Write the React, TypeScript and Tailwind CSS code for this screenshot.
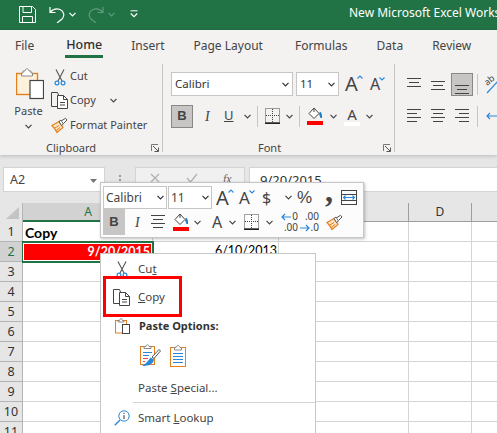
import React from "react";

const UI = { fontFamily: '"Noto Sans", "Open Sans", sans-serif' };

const Chev = ({ c = "#444", className = "" }: { c?: string; className?: string }) => (
  <svg width="7" height="5" viewBox="0 0 7 5" className={"shrink-0 " + className}>
    <polyline points="0.5,0.8 3.5,3.8 6.5,0.8" fill="none" stroke={c} strokeWidth="1.2" />
  </svg>
);

const Scissors = () => (
  <svg width="12" height="17" viewBox="0 0 12 17" className="shrink-0">
    <path d="M2 0.5 L8 12 M10 0.5 L4 12" stroke="#555" strokeWidth="1.1" fill="none" />
    <circle cx="3" cy="14" r="1.9" fill="none" stroke="#2b88d8" strokeWidth="1.2" />
    <circle cx="9" cy="14" r="1.9" fill="none" stroke="#2b88d8" strokeWidth="1.2" />
  </svg>
);

const CopyIcon = () => (
  <svg width="17" height="17" viewBox="0 0 17 17" className="shrink-0">
    <path d="M6 14.5 H0.5 V0.5 H6.5 L7.5 3" fill="none" stroke="#444" />
    <path d="M6.5 3.5 H12.5 L16.5 7.5 V16.5 H6.5 Z" fill="#fff" stroke="#444" />
    <path d="M12.5 3.5 V7.5 H16.5 M9 10.5 H14 M9 13 H14" fill="none" stroke="#444" />
  </svg>
);

const Brush = ({ s = 17 }: { s?: number }) => (
  <svg width={s} height={s} viewBox="0 0 17 16" className="shrink-0">
    <path d="M1 8 L8 4 L12 10 L6 15 C5 13 3 10 1 8 Z" fill="#fbe3c4" stroke="#e3801e" strokeWidth="1.2" />
    <path d="M3 11 L8 8 M5 13 L9 10" stroke="#e3801e" />
    <path d="M8 4 L10 2.5 L12.5 6.5 L10.5 8 Z" fill="#fff" stroke="#555" />
    <path d="M11 3 L14.5 0.8 L16 2.5 L12.5 6" fill="#fff" stroke="#555" />
  </svg>
);

const Launcher = ({ className = "" }: { className?: string }) => (
  <svg width="8" height="8" viewBox="0 0 8 8" className={"shrink-0 " + className}>
    <path d="M0.5 7 V0.5 H7" fill="none" stroke="#777" />
    <path d="M2 2 L7 7 M3.5 7.5 H7.5 V3.5" fill="none" stroke="#555" />
  </svg>
);

const Lines = ({ w = 14, ws = [14, 14, 14], ox = [0, 0, 0], gap = 5, y0 = 1 }: { w?: number; ws?: number[]; ox?: number[]; gap?: number; y0?: number }) => (
  <svg width={w} height="14" viewBox={`0 0 ${w} 14`} className="shrink-0">
    {ws.map((l, i) => (
      <line key={i} x1={ox[i]} x2={ox[i] + l} y1={y0 + i * gap + 0.5} y2={y0 + i * gap + 0.5} stroke="#444" />
    ))}
  </svg>
);

const Fill = () => (
  <svg width="17" height="18" viewBox="0 0 17 18" className="shrink-0">
    <path d="M7 1 L12 6.5 L7 11.5 L2 6.5 Z" fill="#fff" stroke="#444" />
    <path d="M7 1 V5" stroke="#444" />
    <path d="M12 7 C13 4 13.5 3.5 15 8 V11 H13.5 Z" fill="#1f7fc8" />
    <rect x="0" y="14" width="16" height="4" fill="#f00" />
  </svg>
);

const Borders = () => (
  <svg width="15" height="16" viewBox="0 0 15 16" className="shrink-0">
    <rect x="0.5" y="0.5" width="14" height="14" fill="none" stroke="#444" strokeDasharray="1 1" />
    <path d="M7.5 1 V14 M1 7.5 H14" stroke="#444" strokeDasharray="1 1" />
    <rect x="0" y="14.5" width="15" height="1.5" fill="#222" />
  </svg>
);

const DecIcon = ({ left }: { left: boolean }) => (
  <div className="flex flex-col items-end w-[17px] text-[10px] leading-[11px] text-[#444] relative shrink-0">
    {left ? (
      <>
        <span className="flex items-center">
          <svg width="11" height="8" viewBox="0 0 11 8"><path d="M10 4 H1 M4 1 L1 4 L4 7" fill="none" stroke="#2b88d8" strokeWidth="1.2" /></svg>
          <span>0</span>
        </span>
        <span>.00</span>
      </>
    ) : (
      <>
        <span>.00</span>
        <span className="flex items-center">
          <svg width="11" height="8" viewBox="0 0 11 8"><path d="M0 4 H9 M6 1 L9 4 L6 7" fill="none" stroke="#2b88d8" strokeWidth="1.2" /></svg>
          <span>.0</span>
        </span>
      </>
    )}
  </div>
);

const GrowA = ({ up, size = 20 }: { up: boolean; size?: number }) => (
  <span className="flex items-start text-[#444] w-[16px] shrink-0 leading-none" style={{ fontSize: size }}>
    A
    <svg width="6" height="4" viewBox="0 0 6 4" className="mt-[1px] -ml-[1px] shrink-0">
      <polyline points={up ? "0.5,3.5 3,1 5.5,3.5" : "0.5,0.5 3,3 5.5,0.5"} fill="none" stroke="#2b88d8" strokeWidth="1.1" />
    </svg>
  </span>
);

const PasteLarge = () => (
  <svg width="28" height="32" viewBox="0 0 28 32" className="shrink-0">
    <rect x="0.5" y="5.5" width="21" height="21" fill="#fdf1dc" stroke="#e3801e" strokeWidth="1.4" />
    <path d="M7 5 V3 H9 C9.5 0 12.5 0 13 3 H15 V5 L16.5 5 V8 H5.5 V5 Z" fill="#fff" stroke="#888" />
    <rect x="14" y="12.5" width="13.5" height="18" fill="#fff" stroke="#444" strokeWidth="1.2" />
  </svg>
);

const PasteSmall = () => (
  <svg width="15" height="16" viewBox="0 0 15 16" className="shrink-0">
    <rect x="0.5" y="2.5" width="11" height="12.5" fill="#fff" stroke="#e3801e" />
    <path d="M3 2.5 H4.5 C5 0 7 0 7.5 2.5 H9 V4 H3 Z" fill="#fff" stroke="#888" />
    <rect x="7.5" y="6.5" width="7" height="9" fill="#fff" stroke="#444" />
  </svg>
);

const PasteFormat = () => (
  <svg width="21" height="23" viewBox="0 0 21 23" className="shrink-0">
    <rect x="0.5" y="2.5" width="14" height="18" fill="#fff" stroke="#e3801e" />
    <path d="M4 2.5 H6 C6.5 0 8.5 0 9 2.5 H11 V4.5 H4 Z" fill="#fff" stroke="#888" />
    <path d="M3 8.5 H12 M3 11.5 H9" stroke="#2b88d8" />
    <path d="M3 14.5 H8 M3 17.5 H5" stroke="#e84b3c" />
    <path d="M12 13 L19 5.5 L20.5 7 L14 14.5 Z" fill="#fff" stroke="#555" />
    <path d="M10.5 13.5 L14 15.5 C13.5 20 9 22 2 22 C6 20 8 17 10.5 13.5 Z" fill="#2b88d8" />
  </svg>
);

const PasteValues = () => (
  <svg width="16" height="22" viewBox="0 0 16 22" className="shrink-0">
    <rect x="0.5" y="2.5" width="15" height="19" fill="#fff" stroke="#e3801e" />
    <path d="M4.5 2.5 H6 C6.5 0 9.5 0 10 2.5 H11.5 V5 H4.5 Z" fill="#fff" stroke="#888" />
    <path d="M3 8.5 H13 M3 11.5 H13 M3 14.5 H13 M3 17.5 H13" stroke="#2b88d8" />
  </svg>
);

const Lookup = () => (
  <svg width="16" height="16" viewBox="0 0 16 16" className="shrink-0">
    <circle cx="10" cy="6" r="5.2" fill="#fff" stroke="#2b88d8" />
    <path d="M6 10 L0.8 15.2" stroke="#2b88d8" strokeWidth="1.4" />
    <path d="M10 5.2 V9 M10 2.8 V4" stroke="#333" />
  </svg>
);

const Wrap = () => (
  <svg width="16" height="15" viewBox="0 0 16 15" className="shrink-0">
    <rect x="0.5" y="0.5" width="15" height="14" fill="none" stroke="#444" />
    <path d="M0 4.5 H16 M0 10.5 H16" stroke="#444" />
    <path d="M2 7.5 H14 M4.5 5.5 L2.5 7.5 L4.5 9.5 M11.5 5.5 L13.5 7.5 L11.5 9.5" fill="none" stroke="#2b88d8" strokeWidth="1.1" />
  </svg>
);

const Orient = () => (
  <svg width="14" height="20" viewBox="0 0 14 20" className="shrink-0">
    <text x="0" y="10" fontSize="9" fill="#444" transform="rotate(-40 4 8)" style={{ fontFamily: '"Noto Sans", sans-serif' }}>ab</text>
    <path d="M2 19 L13 7" stroke="#2b88d8" strokeWidth="1.2" />
  </svg>
);

const Tab = ({ t, x, on }: { t: string; x: string; on?: boolean }) => (
  <div className={"relative h-full flex items-center pt-[3px] " + x + (on ? " text-[#2f2f2f] font-medium text-[12.5px]" : " text-[#444]")}>
    {t}
    {on && <div className="absolute left-0 right-0 bottom-0 h-[3px] bg-[#217346]" />}
  </div>
);

const Section = ({ w, children }: { w: string; children: React.ReactNode }) => (
  <section className={"h-[88px] mt-[6px] border-r border-[#c8c6c4] shrink-0 flex flex-col " + w}>{children}</section>
);

const rows = [1, 2, 3, 4, 5, 6, 7, 8, 9, 10, 11];

const Sep = ({ className = "" }: { className?: string }) => <div className={"w-px h-[21px] bg-[#c8c6c4] shrink-0 " + className} />;

const calibriish = { fontFamily: '"Lato", sans-serif' };

export default function App() {
  return (
    <div className="relative w-[497px] h-[433px] overflow-hidden bg-[#e6e6e6] text-[12px]" style={UI}>
      {/* Title bar */}
      <header className="h-[30px] bg-[#217346] flex items-center text-white">
        <svg width="17" height="17" viewBox="0 0 17 17" className="ml-[19px] mb-[2px] shrink-0">
          <path d="M0.5 0.5 H13.5 L16.5 3.5 V16.5 H0.5 Z M4 0.5 V6.5 H12.5 V0.5 M3.5 16.5 V10.5 H13.5 V16.5" fill="none" stroke="#fff" />
        </svg>
        <svg width="16" height="17" viewBox="0 0 16 17" className="ml-[13px] mb-[2px] shrink-0">
          <path d="M1 1 V6.5 H6.5 M1 6.5 C4 3 8 2.5 11 3.5 C15 5 16 10 13 13 L8 17" fill="none" stroke="#fff" strokeWidth="1.2" />
        </svg>
        <Chev c="#fff" className="ml-[4px] mb-[2px]" />
        <svg width="16" height="17" viewBox="0 0 16 17" className="ml-[12px] mb-[2px] shrink-0">
          <path d="M15 1 V6.5 H9.5 M15 6.5 C12 3 8 2.5 5 3.5 C1 5 0 10 3 13 L8 17" fill="none" stroke="#5f9a7d" strokeWidth="1.2" />
        </svg>
        <Chev c="#5f9a7d" className="ml-[4px] mb-[2px]" />
        <svg width="8" height="8" viewBox="0 0 8 8" className="ml-[15px] mb-[2px] shrink-0">
          <path d="M0.5 0.8 H7.5" stroke="#fff" />
          <polyline points="0.8,3.5 4,6.7 7.2,3.5" fill="none" stroke="#fff" strokeWidth="1.2" />
        </svg>
        <span className="ml-[211px] mb-[5px] whitespace-nowrap text-[12px]">New Microsoft Excel Worksheet</span>
      </header>

      {/* Ribbon */}
      <div className="h-[125px] bg-[#f3f2f1] shadow-[0_1px_4px_rgba(0,0,0,0.2)] relative">
        <nav className="h-[28px] flex text-[12px] whitespace-nowrap">
          <Tab t="File" x="ml-[15px]" />
          <Tab t="Home" x="ml-[31px] w-[38px] justify-center" on />
          <Tab t="Insert" x="ml-[28px]" />
          <Tab t="Page Layout" x="ml-[29px]" />
          <Tab t="Formulas" x="ml-[32px]" />
          <Tab t="Data" x="ml-[29px]" />
          <Tab t="Review" x="ml-[29px]" />
        </nav>
        <div className="flex h-[97px] overflow-hidden text-[#444]">
          <Section w="w-[163px]">
            <div className="h-[76px] shrink-0 flex text-[11px]">
              <div className="ml-[15px] w-[30px] flex flex-col items-center">
                <div className="mt-[4px]"><PasteLarge /></div>
                <span className="mt-[3px] leading-[16px] -ml-[3px]">Paste</span>
                <Chev className="mt-[5px] -ml-[3px]" />
              </div>
              <div className="ml-[6px] flex flex-col whitespace-nowrap">
                <div className="h-[24px] flex items-center">
                  <div className="w-[19px] pl-[3px] pt-[2px] flex"><Scissors /></div>
                  <span>Cut</span>
                </div>
                <div className="h-[25px] flex items-center">
                  <div className="w-[19px] flex"><CopyIcon /></div>
                  <span>Copy</span>
                  <Chev className="ml-[14px]" />
                </div>
                <div className="h-[24px] flex items-center">
                  <div className="w-[19px] flex"><Brush /></div>
                  <span>Format Painter</span>
                </div>
              </div>
            </div>
            <div className="h-[16px] shrink-0 flex items-center leading-[16px] text-[11px]">
              <span className="ml-[46px]">Clipboard</span>
              <Launcher className="ml-auto mr-[3px]" />
            </div>
          </Section>

          <Section w="w-[232px]">
            <div className="h-[76px] shrink-0 pl-[8px] pt-[8px]">
              <div className="flex items-center h-[24px] text-[11.5px]">
                <div className="w-[122px] h-[24px] bg-white border border-[#c8c6c4] flex items-center pl-[3px] text-[#333]">
                  Calibri
                  <Chev c="#333" className="ml-auto mr-[3px]" />
                </div>
                <div className="ml-[3px] w-[43px] h-[24px] bg-white border border-[#c8c6c4] flex items-center pl-[3px] text-[#333]">
                  11
                  <Chev c="#333" className="ml-auto mr-[3px]" />
                </div>
                <div className="ml-[6px]"><GrowA up /></div>
                <div className="ml-[9px]"><GrowA up={false} size={16} /></div>
              </div>
              <div className="flex items-center h-[24px] mt-[8px]">
                <div className="w-[22px] h-[23px] bg-[#c8c6c4] border border-[#8a8886] flex items-center justify-center font-bold text-[13px]" style={{ fontFamily: '"Liberation Sans", sans-serif' }}>B</div>
                <span className="ml-[12px] w-[8px] italic text-[14px]" style={{ fontFamily: '"Liberation Serif", serif' }}>I</span>
                <span className="ml-[11px] w-[10px] underline text-[13px]">U</span>
                <Chev className="ml-[10px]" />
                <Sep className="ml-[6px]" />
                <div className="ml-[7px]"><Borders /></div>
                <Chev className="ml-[6px]" />
                <Sep className="ml-[6px]" />
                <div className="ml-[7px]"><Fill /></div>
                <Chev className="ml-[6px]" />
                <div className="ml-[7px] flex flex-col items-center w-[16px]">
                  <span className="text-[15px] leading-[14px]">A</span>
                  <div className="w-[16px] h-[4px] bg-white mt-[1px]" />
                </div>
                <Chev className="ml-[6px]" />
              </div>
            </div>
            <div className="h-[16px] shrink-0 flex items-center leading-[16px] text-[11px]">
              <span className="ml-[95px]">Font</span>
              <Launcher className="ml-auto mr-[3px]" />
            </div>
          </Section>

          <div className="mt-[6px] pl-[12px] pt-[8px] shrink-0">
            <div className="flex items-center h-[24px]">
              <Lines ws={[14, 10, 14]} ox={[0, 2, 0]} gap={4} y0={1} />
              <div className="ml-[10px]"><Lines ws={[14, 10, 14]} ox={[0, 2, 0]} gap={4} y0={4} /></div>
              <div className="ml-[6px] w-[22px] h-[23px] bg-[#c8c6c4] border border-[#8a8886] flex items-end justify-center pb-[1px]">
                <Lines ws={[14, 10, 14]} ox={[0, 2, 0]} gap={4} y0={5} />
              </div>
              <Sep className="ml-[4px]" />
              <div className="ml-[7px]"><Orient /></div>
            </div>
            <div className="flex items-center h-[24px] mt-[8px]">
              <Lines ws={[14, 10, 14, 10]} ox={[0, 0, 0, 0]} gap={4} y0={0} />
              <div className="ml-[10px]"><Lines ws={[14, 10, 14, 10]} ox={[0, 2, 0, 2]} gap={4} y0={0} /></div>
              <div className="ml-[10px]"><Lines ws={[14, 10, 14, 10]} ox={[0, 4, 0, 4]} gap={4} y0={0} /></div>
              <Sep className="ml-[8px]" />
              <svg width="11" height="8" viewBox="0 0 11 8" className="ml-[8px] shrink-0"><path d="M11 4 H1 M4 1 L1 4 L4 7" fill="none" stroke="#2b88d8" strokeWidth="1.2" /></svg>
            </div>
          </div>
        </div>
      </div>

      {/* Formula bar */}
      <div className="flex h-[25px] mt-[12px] text-[#444]">
        <div className="ml-[3px] w-[102px] h-[25px] bg-white border border-[#d4d4d4] flex items-center pl-[6px] pt-[2px] text-[12.5px]">
          A2
          <svg width="7" height="4" viewBox="0 0 7 4" className="ml-auto mr-[7px]"><path d="M0 0 H7 L3.5 4 Z" fill="#777" /></svg>
        </div>
        <div className="ml-[14px] flex flex-col gap-[2px] pt-[8px]">
          <div className="w-[2px] h-[2px] bg-[#999]" />
          <div className="w-[2px] h-[2px] bg-[#999]" />
          <div className="w-[2px] h-[2px] bg-[#999]" />
        </div>
        <div className="ml-[14px] w-[110px] h-[25px] bg-[#f0f0f0] border border-[#d4d4d4] flex items-start pt-[5px] pl-[14px] text-[#a6a6a6]">
          <svg width="10" height="10" viewBox="0 0 10 10" className="shrink-0"><path d="M1 1 L9 9 M9 1 L1 9" stroke="#b0b0b0" strokeWidth="1.3" /></svg>
          <svg width="12" height="10" viewBox="0 0 12 10" className="ml-[26px] shrink-0"><path d="M1 5 L4.5 9 L11 1" fill="none" stroke="#b0b0b0" strokeWidth="1.3" /></svg>
          <span className="ml-[25px] italic text-[#666] text-[12px] leading-[12px]" style={{ fontFamily: '"Liberation Serif", serif' }}>fx</span>
        </div>
        <div className="ml-[4px] flex-1 h-[25px] bg-white border border-[#d4d4d4] border-r-0 pl-[10px] pt-[2px] flex items-center text-[13px] text-[#333] whitespace-nowrap">
          9/20/2015
        </div>
      </div>

      {/* Sheet */}
      <div className="mt-[11px] grid grid-cols-[23px_130px_126px_130px_63px_25px] grid-rows-[19px_repeat(11,20px)] text-[#333]">
        <div className="border-r border-[#b4b4b4] relative flex items-end justify-end pb-[3px] pr-[3px]">
          <svg width="13" height="12" viewBox="0 0 13 12"><path d="M13 0 V12 H0 Z" fill="#c4c4c4" /></svg>
        </div>
        <div className="bg-[#d2d2d2] border-b-2 border-[#217346] flex items-center justify-center text-[#217346] text-[12px]">A</div>
        <div className="border-b border-[#9e9e9e]" />
        <div className="border-b border-r border-[#9e9e9e]" />
        <div className="border-b border-r border-[#9e9e9e] flex items-center justify-center text-[12px] text-[#333]">D</div>
        <div className="border-b border-[#9e9e9e]" />
        {rows.map((r) => (
          <React.Fragment key={r}>
            <div className={"border-b border-r border-b-[#b4b4b4] flex items-center justify-center pt-[2px] text-[12.5px] " + (r === 2 ? "bg-[#d2d2d2] border-r-[#217346] text-[#217346]" : "border-r-[#b4b4b4] bg-[#e6e6e6]")}>{r}</div>
            {r === 2 ? (
              <div className="bg-[#f00] border-2 border-[#217346] -mx-[1px] -my-[1px] z-10 flex items-center justify-end pr-[1px] font-bold text-white text-[12.5px]" style={calibriish}>
                <div className="bg-[#f00] outline-1 outline-white w-full text-right pr-[1px] leading-[16px]">9/20/2015</div>
              </div>
            ) : (
              <div className="bg-white border-b border-r border-[#d4d4d4] flex items-center pl-[2px] pt-[2px] font-bold text-[14px] text-black" style={calibriish}>{r === 1 ? "Copy" : ""}</div>
            )}
            <div className="bg-white border-b border-r border-[#d4d4d4] flex items-center justify-end pr-[1px] text-[12.5px] text-black" style={calibriish}>{r === 2 ? "6/10/2013" : ""}</div>
            <div className="bg-white border-b border-r border-[#d4d4d4]" />
            <div className="bg-white border-b border-r border-[#d4d4d4]" />
            <div className="bg-white border-b border-[#d4d4d4]" />
          </React.Fragment>
        ))}
      </div>

      {/* Mini toolbar */}
      <div className="absolute z-20 left-[100px] top-[182px] w-[264px] h-[56px] bg-[#fcfcfc] border border-[#c6c6c6] shadow-[1px_1px_3px_rgba(0,0,0,0.25)] pl-[2px] pt-[3px] text-[#444]">
        <div className="flex items-center h-[23px]">
          <div className="w-[64px] h-[23px] bg-white border border-[#c8c6c4] flex items-center pl-[2px] text-[12px]">
            Calibri
            <Chev c="#333" className="ml-auto mr-[2px]" />
          </div>
          <div className="ml-[1px] w-[44px] h-[23px] bg-white border border-[#c8c6c4] flex items-center pl-[2px] text-[12px]">
            11
            <Chev c="#333" className="ml-auto mr-[2px]" />
          </div>
          <div className="ml-[4px]"><GrowA up /></div>
          <div className="ml-[7px]"><GrowA up={false} size={17} /></div>
          <span className="ml-[7px] w-[10px] text-[16px] leading-none">$</span>
          <Chev className="ml-[13px]" />
          <span className="ml-[5px] w-[16px] text-[17px] leading-none" style={{ fontFamily: '"Liberation Sans", sans-serif' }}>%</span>
          <span className="ml-[12px] w-[8px] text-[32px] font-bold leading-none -mt-[14px]" style={{ fontFamily: '"Liberation Serif", serif' }}>,</span>
          <div className="ml-[8px]"><Wrap /></div>
        </div>
        <div className="flex items-center h-[26px]">
          <div className="w-[22px] h-[26px] bg-[#c8c6c4] flex items-center justify-center font-bold text-[13px]" style={{ fontFamily: '"Liberation Sans", sans-serif' }}>B</div>
          <span className="ml-[10px] w-[6px] italic text-[14px]" style={{ fontFamily: '"Liberation Serif", serif' }}>I</span>
          <div className="ml-[10px]"><Lines ws={[14, 10, 14, 10]} ox={[0, 2, 0, 2]} gap={4} y0={0} /></div>
          <div className="ml-[8px]"><Fill /></div>
          <Chev className="ml-[4px]" />
          <span className="ml-[8px] w-[16px] text-[16px] leading-none text-center">A</span>
          <Chev className="ml-[4px]" />
          <div className="ml-[8px]"><Borders /></div>
          <Chev className="ml-[7px]" />
          <div className="ml-[8px]"><DecIcon left /></div>
          <div className="ml-[4px]"><DecIcon left={false} /></div>
          <div className="ml-[7px]"><Brush /></div>
        </div>
      </div>

      {/* Context menu */}
      <div className="absolute z-30 left-[100px] top-[253px] w-[216px] h-[190px] bg-white border border-[#c6c6c6] pt-[4px] text-[11.5px] text-[#444] whitespace-nowrap">
        <div className="h-[22px] flex items-center">
          <div className="w-[37px] pl-[15px] flex"><Scissors /></div>
          <span>Cu<u>t</u></span>
        </div>
        <div className="h-[22px] mt-[6px] flex items-center">
          <div className="w-[37px] pl-[12px] flex"><CopyIcon /></div>
          <span><u>C</u>opy</span>
        </div>
        <div className="h-[22px] mt-[7px] flex items-center">
          <div className="w-[38px] pl-[14px] flex"><PasteSmall /></div>
          <span className="font-bold text-[#333] text-[11px]">Paste Options:</span>
        </div>
        <div className="h-[23px] mt-[7px] pl-[39px] flex items-center gap-[9px]">
          <PasteFormat />
          <PasteValues />
        </div>
        <div className="h-[22px] mt-[10px] pl-[37px] flex items-center">
          <span>Paste <u>S</u>pecial...</span>
        </div>
        <div className="ml-[32px] mt-[3px] h-px bg-[#d4d4d4]" />
        <div className="h-[22px] mt-[4px] flex items-center">
          <div className="w-[37px] pl-[13px] -mt-[1px] flex"><Lookup /></div>
          <span>Smart <u>L</u>ookup</span>
        </div>
      </div>

      {/* Red callout */}
      <div className="absolute z-40 left-[103px] top-[276px] w-[79px] h-[41px] border-[3px] border-[#f00]" />
    </div>
  );
}
